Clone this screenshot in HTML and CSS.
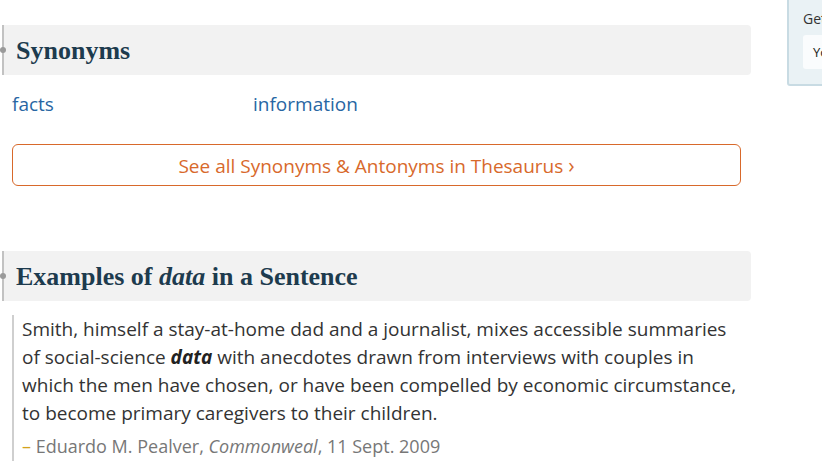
FILE: index.html
```html
<!DOCTYPE html>
<html lang="en">
<head>
    <meta charset="UTF-8">
    <title>data - Synonyms and Examples</title>
    <link rel="stylesheet" href="styles.css">
</head>
<body>
    <div class="page">
        <main class="main">
            <!-- Synonyms -->
            <section class="block synonyms">
                <h2 class="block-title">Synonyms</h2>
                <ul class="syn-list">
                    <li><a href="#">facts</a></li>
                    <li><a href="#">information</a></li>
                </ul>
                <a class="thesaurus-btn" href="#">See all Synonyms &amp; Antonyms in Thesaurus <span class="chev">&#8250;</span></a>
            </section>

            <!-- Examples -->
            <section class="block examples">
                <h2 class="block-title">Examples of <em>data</em> in a Sentence</h2>
                <div class="example">
                    <p class="ex-text">Smith, himself a stay-at-home dad and a journalist, mixes accessible summaries of social-science <em>data</em> with anecdotes drawn from interviews with couples in which the men have chosen, or have been compelled by economic circumstance, to become primary caregivers to their children.</p>
                    <p class="ex-source"><span class="dash">&ndash;</span> Eduardo M. Pealver, <em>Commonweal</em>, 11 Sept. 2009</p>
                </div>
            </section>
        </main>

        <aside class="sidebar">
            <div class="side-box">
                <label class="side-label">Get Word of the Day</label>
                <div class="side-input">Your email address</div>
            </div>
        </aside>
    </div>
</body>
</html>
```

FILE: styles.css
```css
html, body {
    margin: 0;
    padding: 0;
    background: #fff;
    overflow: hidden;
}
body {
    font-family: "Open Sans", sans-serif;
    color: #333;
}
.page {
    display: flex;
    align-items: flex-start;
    gap: 36px;
}
.main {
    width: 749px;
    margin-left: 2px;
    flex-shrink: 0;
}
.block {
    padding-top: 25px;
}
.examples {
    padding-top: 65px;
}
.block-title {
    position: relative;
    margin: 0;
    height: 50px;
    line-height: 52px;
    padding-left: 12px;
    background: #f2f2f2;
    border-left: 2px solid #c2c2c2;
    border-radius: 0 4px 4px 0;
    font-family: "Liberation Serif", serif;
    font-size: 26px;
    font-weight: bold;
    color: #1d3b4e;
    box-sizing: border-box;
}
.block-title::before {
    content: "";
    position: absolute;
    left: -4px;
    top: 22px;
    width: 6px;
    height: 6px;
    border-radius: 50%;
    background: #9a9a9a;
}
.block-title em {
    font-style: italic;
}
.syn-list {
    list-style: none;
    margin: 0;
    padding: 14px 0 0 10px;
    display: grid;
    grid-template-columns: 241px 241px;
}
.syn-list a {
    font-size: 19px;
    line-height: 30px;
    color: #2866a3;
    text-decoration: none;
}
.thesaurus-btn {
    display: block;
    margin: 25px 0 0 10px;
    width: 729px;
    height: 42px;
    line-height: 40px;
    box-sizing: border-box;
    border: 1px solid #d8692b;
    border-radius: 6px;
    text-align: center;
    font-size: 19px;
    color: #d8692b;
    text-decoration: none;
}
.chev {
    font-size: 21px;
}
.example {
    margin: 14px 0 0 10px;
    padding-left: 8px;
    border-left: 2px solid #cfcfcf;
    width: 719px;
}
.ex-text {
    margin: 0;
    font-size: 19px;
    line-height: 28px;
    color: #333;
}
.ex-text em {
    font-weight: bold;
    color: #222;
}
.ex-source {
    margin: 4px 0 0;
    font-size: 18px;
    line-height: 30px;
    color: #777;
}
.dash {
    color: #d4a21c;
}
.sidebar {
    width: 300px;
    flex-shrink: 0;
}
.side-box {
    margin-top: -4px;
    padding: 12px 14px 15px;
    background: #eaf2f5;
    border: 2px solid #c8dbe3;
    border-radius: 3px;
}
.side-label {
    display: block;
    font-size: 14px;
    line-height: 18px;
    color: #333;
    margin-bottom: 7px;
}
.side-input {
    background: #fafcfd;
    border-radius: 3px;
    height: 34px;
    line-height: 34px;
    padding-left: 10px;
    font-size: 13px;
    color: #222;
}
```
